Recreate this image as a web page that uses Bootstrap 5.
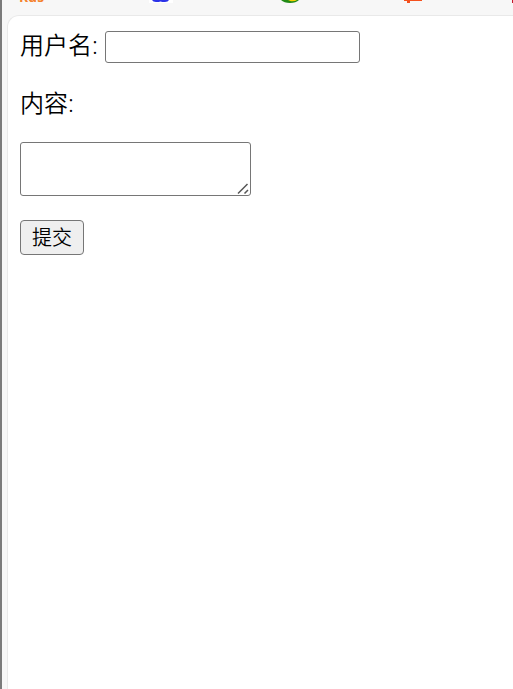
<!DOCTYPE html>
<html lang="zh-CN">
<head>
<meta charset="utf-8">
<meta name="viewport" content="width=device-width, initial-scale=1">
<title>留言</title>
<link href="https://cdn.jsdelivr.net/npm/bootstrap@5.3.0/dist/css/bootstrap.min.css" rel="stylesheet">
<style>
body{background:#f7f7f7;border-left:2px solid #7b7b7b;font-family:"Noto Sans","Noto Sans CJK SC",sans-serif;font-size:24px;font-weight:350;line-height:32px;color:#000}
.bookmarks{height:15px}
.bookmarks svg{height:15px;width:511px}
.bookmarks text{font:700 14px "Open Sans",sans-serif}
.page-pane{margin-left:5px;border:1px solid #e9e9e9;border-right:0;border-bottom:0;border-top-left-radius:12px;padding:15px 0 0 12px}
.page-pane label{white-space:nowrap}
.page-pane .form-control{border:1px solid #767676;border-radius:3px;box-shadow:none;background:#fff}
.name-label{width:85px;height:32px;line-height:28px}
.page-pane .name-input{width:255px;height:32px;min-height:0}
.content-label{height:32px;line-height:30px;margin:25px 0 22px}
.content-box{width:231px;height:54px}
.page-pane .content-input{width:231px;height:54px;min-height:0;resize:none}
.grip{right:1px;bottom:1px}
.page-pane .send{width:64px;height:35px;margin-top:24px;border:1px solid #767676;border-radius:4px;background:#efefef;color:#000;font-size:20px;font-weight:350;line-height:34px}
</style>
<script src="https://cdn.jsdelivr.net/npm/bootstrap@5.3.0/dist/js/bootstrap.bundle.min.js"></script>
</head>
<body class="vh-100 overflow-hidden d-flex flex-column">
<div class="bookmarks flex-shrink-0">
<svg class="d-block" viewBox="2 0 511 15">
<text x="19" y="2" fill="#f5822c" textLength="25" lengthAdjust="spacingAndGlyphs">Rus</text>
<path d="M149 0H173V3H149Z" fill="#fff"/>
<path d="M152 0H169Q168 2 165 2Q162 2 160.500 1.500Q159 2 156 2Q153 2 152 0Z" fill="#2b32e8"/>
<path d="M281 0H299Q296 3 290 3Q284 3 281 0Z" fill="#218a16"/>
<path d="M288 0H297Q295 1.500 291 1.200Z" fill="#f8d000"/>
<path d="M404 0H422V1H410V3H407V1H404Z" fill="#f4511e"/>
<path d="M512 0H513V3H512Z" fill="#c4162a"/>
</svg>
</div>
<main class="page-pane bg-white flex-grow-1">
<form>
<div class="d-flex">
<label class="name-label" for="user">用户名:</label>
<input class="form-control name-input p-1" id="user" type="text">
</div>
<label class="content-label d-block" for="content">内容:</label>
<div class="content-box position-relative">
<textarea class="form-control content-input p-1" id="content"></textarea>
<svg class="grip position-absolute" width="13" height="13" viewBox="0 0 13 13" fill="none" stroke="#555" stroke-width="1.500"><path d="M1 11.500 10.500 2M7.500 11.500 11 8"/></svg>
</div>
<button class="send btn p-0 d-block" type="button">提交</button>
</form>
</main>
</body>
</html>
